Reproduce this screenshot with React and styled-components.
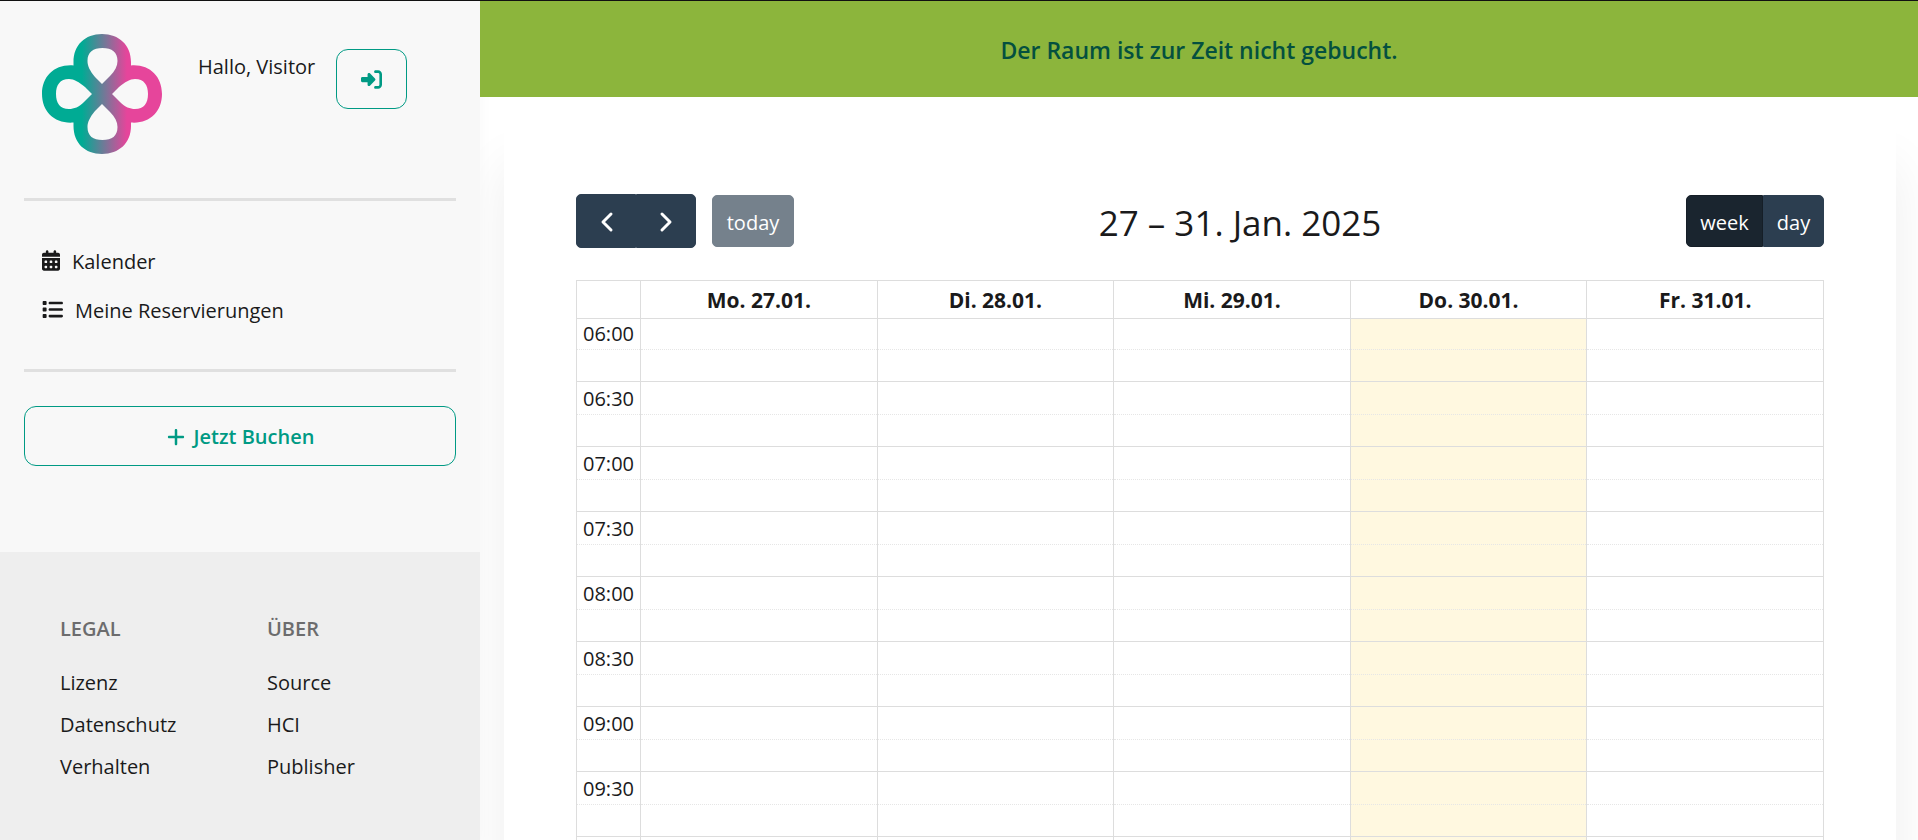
import React from "react";
import styled, { createGlobalStyle } from "styled-components";
import { FaCalendarDays, FaList, FaPlus, FaRightToBracket } from "react-icons/fa6";

const GlobalStyle = createGlobalStyle`
  *, *::before, *::after { box-sizing: border-box; }
  html { scrollbar-width: none; }
  body {
    margin: 0;
    background: #fff;
    color: #1a1a1b;
    font: 400 20px/32px "Open Sans", "Noto Sans", sans-serif;
  }
  button { font: inherit; cursor: pointer; }
  a { color: inherit; text-decoration: none; }
`;

const Page = styled.div`
  display: flex;
  height: 100vh;
  border-top: 1px solid #111;
  overflow: hidden;
`;

const Sidebar = styled.aside`
  position: relative;
  z-index: 1;
  display: flex;
  flex-direction: column;
  flex: 0 0 480px;
  background: #f8f8f8;
  box-shadow: 0 5px 15px rgba(0, 0, 0, 0.03);
`;

const SidebarBody = styled.div`
  flex: 1;
  padding: 33px 24px 0;
`;

const UserBar = styled.header`
  display: flex;
  align-items: flex-start;
  padding: 0 18px;
  height: 164px;
`;

const Logo = styled.svg`
  width: 120px;
  height: 120px;
  margin-right: 36px;
`;

const Greeting = styled.span`
  padding-top: 17px;
  margin-right: 21px;
  white-space: nowrap;
`;

const OutlineButton = styled.button`
  display: flex;
  align-items: center;
  justify-content: center;
  gap: 8px;
  width: ${(p) => (p.$wide ? "100%" : "71px")};
  height: 60px;
  margin-top: ${(p) => (p.$wide ? "0" : "15px")};
  padding: ${(p) => (p.$wide ? "2px 0 0" : "0")};
  color: #009a84;
  background: transparent;
  border: 1px solid #009a84;
  border-radius: 12px;
  font-weight: 600;
`;

const Divider = styled.hr`
  height: 3px;
  margin: 0;
  border: 0;
  background: #e0e0e0;
`;

const Nav = styled.nav`
  display: flex;
  flex-direction: column;
  gap: 17px;
  padding: 45px 18px 42px;
`;

const NavLink = styled.a`
  display: flex;
  align-items: center;
  gap: 12px;
  svg {
    width: ${(p) => p.$iconWidth}px;
    height: 21px;
    margin-bottom: 3px;
  }
`;

const BookingArea = styled.div`
  padding-top: 34px;
`;

const SidebarFooter = styled.footer`
  display: grid;
  grid-template-columns: 207px 1fr;
  align-content: start;
  height: 288px;
  padding: 61px 60px 0;
  background: #eee;
`;

const FooterHeading = styled.h2`
  margin: 0 0 22px;
  font-size: 20px;
  line-height: 32px;
  font-weight: 600;
  color: #6c6c6d;
`;

const FooterList = styled.ul`
  display: grid;
  gap: 10px;
  margin: 0;
  padding: 0;
  list-style: none;
`;

const Main = styled.main`
  flex: 1;
  min-width: 0;
`;

const StatusBanner = styled.div`
  position: relative;
  z-index: 1;
  padding: 33px 32px 31px;
  text-align: center;
  font-size: 23px;
  font-weight: 600;
  color: #04503f;
  background: #8cb53c;
`;

const Card = styled.section`
  margin: 24px 22px 0 24px;
  padding: 72px;
  min-height: 100vh;
  background: #fff;
  box-shadow: 0 44px 50px rgba(0, 0, 0, 0.07);
`;

const Toolbar = styled.div`
  display: flex;
  align-items: center;
  justify-content: space-between;
  height: 56px;
  margin-bottom: 31px;
`;

const ToolGroup = styled.div`
  display: flex;
  align-items: center;
`;

const Title = styled.h1`
  margin: 0;
  padding-top: 3px;
  font-size: 35px;
  line-height: 48px;
  font-weight: 400;
`;

const CalButton = styled.button`
  display: flex;
  align-items: center;
  justify-content: center;
  width: ${(p) => p.$width}px;
  height: ${(p) => (p.$icon ? "54px" : "52px")};
  margin-left: ${(p) => (p.$spaced ? "16px" : "0")};
  padding: ${(p) => (p.$icon ? "2px 0 0" : "3px 0 0")};
  color: #fff;
  background: ${(p) => (p.$active ? "#1a252f" : "#2c3e50")};
  border: 1px solid ${(p) => (p.$active ? "#151e27" : "#2c3e50")};
  border-radius: ${(p) => (p.$side === "left" ? "5px 0 0 5px" : p.$side === "right" ? "0 5px 5px 0" : "5px")};
  &:disabled { opacity: 0.65; }
`;

const Chevron = styled.svg`
  width: 32px;
  height: 32px;
  fill: none;
  stroke: currentColor;
  stroke-width: 3;
  stroke-linecap: round;
  stroke-linejoin: round;
`;

const Grid = styled.table`
  width: 100%;
  table-layout: fixed;
  border-collapse: collapse;
  border: 1px solid #ddd;
`;

const DayHead = styled.th`
  width: ${(p) => (p.$axis ? "64px" : "auto")};
  height: 38px;
  padding: 1px 0 0;
  font-size: 21px;
  line-height: 36px;
  font-weight: 700;
  border: 1px solid #ddd;
`;

const SlotRow = styled.tr`
  height: ${(p) => (p.$first ? "31px" : p.$minor ? "32px" : "33px")};
`;

const Slot = styled.td`
  padding: 0;
  border: 1px solid #ddd;
  border-top: 1px ${(p) => (p.$minor ? "dotted #e6e6e6" : "solid #ddd")};
  border-bottom-style: none;
  background: ${(p) => (p.$today ? "#fff8e0" : "transparent")};
`;

const TimeLabel = styled(Slot).attrs({ as: "th", scope: "row" })`
  padding-top: ${(p) => (p.$first ? "0" : "2px")};
  font-weight: 400;
  line-height: 30px;
  text-align: center;
  vertical-align: top;
`;

const days = ["Mo. 27.01.", "Di. 28.01.", "Mi. 29.01.", "Do. 30.01.", "Fr. 31.01."];
const times = ["06:00", "06:30", "07:00", "07:30", "08:00", "08:30", "09:00", "09:30"];
const today = 3;

const footerColumns = [
  { title: "LEGAL", links: ["Lizenz", "Datenschutz", "Verhalten"] },
  { title: "ÜBER", links: ["Source", "HCI", "Publisher"] },
];

function CloverLogo() {
  return (
    <Logo viewBox="0 0 120 120" role="img" aria-label="Logo">
      <defs>
        <linearGradient id="clover" gradientUnits="userSpaceOnUse" x1="40" y1="0" x2="85" y2="0">
          <stop offset="0" stopColor="#00ab94" />
          <stop offset="1" stopColor="#e6459b" />
        </linearGradient>
      </defs>
      <path
        fill="url(#clover)"
        fillRule="evenodd"
        d="M60 0C77 0 89 11 89 28V31.500C107 30 120 42 120 60C120 78 107 90 89 88.500V92C89 109 77 120 60 120C43 120 31.500 109 31.500 92V88.500C13 90 0 78 0 60C0 42 13 30 31.500 31.500V28C31.500 11 43 0 60 0Z
        M60 50L53 43C48 37 45.500 32 45.500 27C45.500 18 51 14 60.500 14C70 14 75.500 18 75.500 27C75.500 32 73 37 68 42Z
        M60 70L53 77C48 83 45.500 88 45.500 93C45.500 102 51 106 60.500 106C70 106 75.500 102 75.500 93C75.500 88 73 83 68 78Z
        M50 60L43 53C37 48 32 45 27 45C18 45 14 51 14 60C14 69 18 75 27 75C32 75 37 73 42 68Z
        M70 60L77 53C83 48 88 45 93 45C102 45 106 51 106 60C106 69 102 75 93 75C88 75 83 73 78 68Z"
      />
    </Logo>
  );
}

export default function App() {
  return (
    <>
      <GlobalStyle />
      <Page>
        <Sidebar>
          <SidebarBody>
            <UserBar>
              <CloverLogo />
              <Greeting>Hallo, Visitor</Greeting>
              <OutlineButton type="button" aria-label="Anmelden">
                <FaRightToBracket size={21} />
              </OutlineButton>
            </UserBar>
            <Divider />
            <Nav>
              <NavLink href="#kalender" $iconWidth={18}><FaCalendarDays />Kalender</NavLink>
              <NavLink href="#reservierungen" $iconWidth={21}><FaList />Meine Reservierungen</NavLink>
            </Nav>
            <Divider />
            <BookingArea>
              <OutlineButton type="button" $wide><FaPlus size={20} />Jetzt Buchen</OutlineButton>
            </BookingArea>
          </SidebarBody>
          <SidebarFooter>
            {footerColumns.map((column) => (
              <div key={column.title}>
                <FooterHeading>{column.title}</FooterHeading>
                <FooterList>
                  {column.links.map((link) => (
                    <li key={link}><a href={`#${link.toLowerCase()}`}>{link}</a></li>
                  ))}
                </FooterList>
              </div>
            ))}
          </SidebarFooter>
        </Sidebar>
        <Main>
          <StatusBanner role="status">Der Raum ist zur Zeit nicht gebucht.</StatusBanner>
          <Card>
            <Toolbar>
              <ToolGroup>
                <CalButton type="button" $icon $width={60} $side="left" aria-label="Vorherige Woche">
                  <Chevron viewBox="0 0 32 32"><path d="M21 8L13 16L21 24" /></Chevron>
                </CalButton>
                <CalButton type="button" $icon $width={60} $side="right" aria-label="Nächste Woche">
                  <Chevron viewBox="0 0 32 32"><path d="M12 8L20 16L12 24" /></Chevron>
                </CalButton>
                <CalButton type="button" $width={82} $spaced disabled>today</CalButton>
              </ToolGroup>
              <Title>27 – 31. Jan. 2025</Title>
              <ToolGroup>
                <CalButton type="button" $width={77} $side="left" $active aria-pressed="true">week</CalButton>
                <CalButton type="button" $width={61} $side="right" aria-pressed="false">day</CalButton>
              </ToolGroup>
            </Toolbar>
            <Grid>
              <thead>
                <tr>
                  <DayHead $axis aria-label="Uhrzeit" />
                  {days.map((day) => <DayHead key={day} scope="col">{day}</DayHead>)}
                </tr>
              </thead>
              <tbody>
                {times.map((time, index) => (
                  <React.Fragment key={time}>
                    <SlotRow $first={index === 0}>
                      <TimeLabel $first={index === 0}>{time}</TimeLabel>
                      {days.map((day, column) => <Slot key={day} $today={column === today} />)}
                    </SlotRow>
                    <SlotRow $minor>
                      <Slot $minor />
                      {days.map((day, column) => <Slot key={day} $minor $today={column === today} />)}
                    </SlotRow>
                  </React.Fragment>
                ))}
                <SlotRow>
                  <Slot />
                  {days.map((day, column) => <Slot key={day} $today={column === today} />)}
                </SlotRow>
              </tbody>
            </Grid>
          </Card>
        </Main>
      </Page>
    </>
  );
}
